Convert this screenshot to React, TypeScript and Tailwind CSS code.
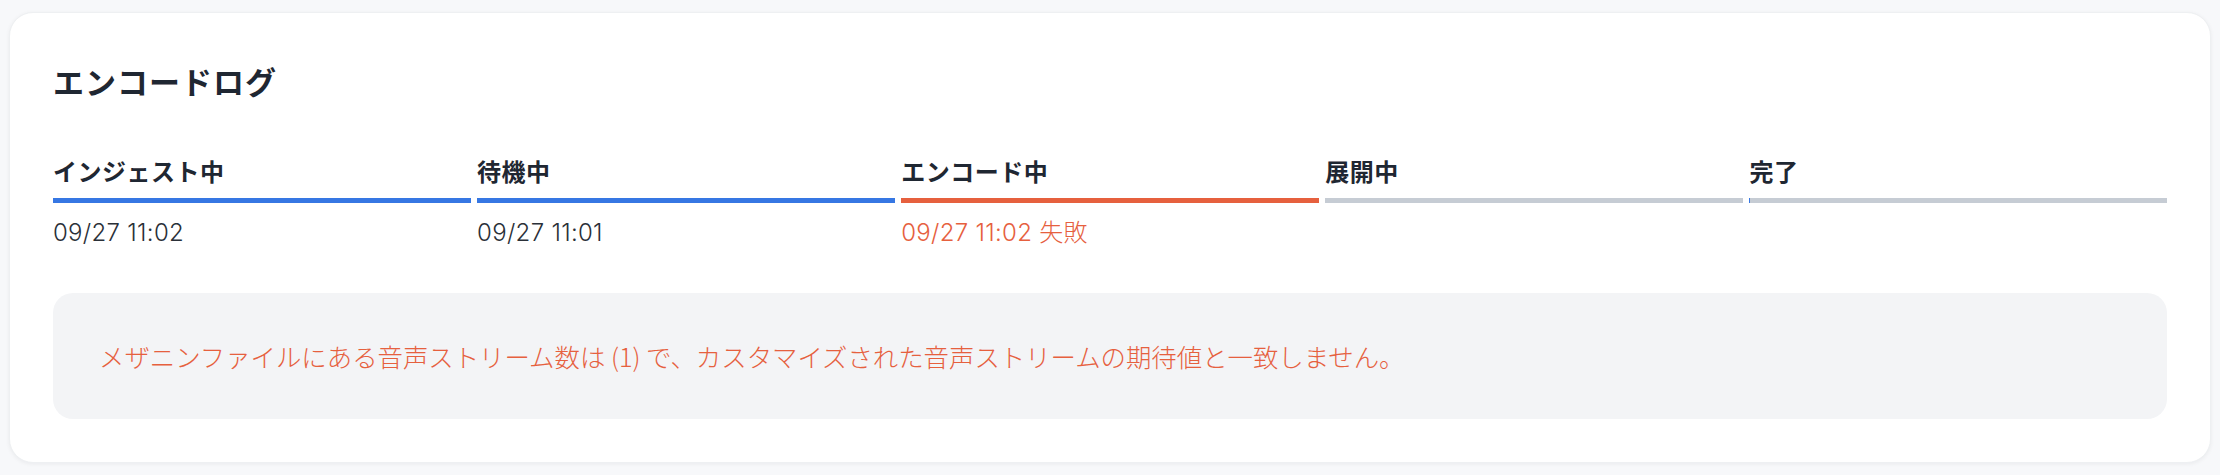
import React from 'react'

type Step = {
  label: string
  time?: string
  state: 'done' | 'failed' | 'pending'
}

const steps: Step[] = [
  { label: 'インジェスト中', time: '09/27 11:02', state: 'done' },
  { label: '待機中', time: '09/27 11:01', state: 'done' },
  { label: 'エンコード中', time: '09/27 11:02 失敗', state: 'failed' },
  { label: '展開中', state: 'pending' },
  { label: '完了', state: 'pending' },
]

function StepColumn({ step, isLast }: { step: Step; isLast: boolean }) {
  return (
    <div className="flex flex-col">
      <div className="h-[32px] text-[24px] leading-[32px] font-bold text-[#1f2732] tracking-[0.5px]">
        {step.label}
      </div>
      {/* progress bar */}
      <div
        className={`mt-[11px] h-[5px] w-full ${
          step.state === 'done'
            ? 'bg-[#3677e3]'
            : step.state === 'failed'
              ? 'bg-[#e6603e]'
              : 'bg-[#c6ccd4]'
        }`}
      >
        {isLast && <div className="h-full w-px bg-[#3677e3]" />}
      </div>
      <div
        className={`mt-[15px] h-[30px] text-[24px] leading-[30px] font-light tracking-[0.3px] ${
          step.state === 'failed' ? 'text-[#e6603e]' : 'text-[#2a3038]'
        }`}
        style={{ fontFamily: 'Inter, "Noto Sans CJK JP", sans-serif' }}
      >
        {step.time ?? ''}
      </div>
    </div>
  )
}

export default function App() {
  return (
    <div
      className="min-h-[475px] w-full bg-[#f7f8fa] pt-[12px] pl-[9px] pr-[9px] pb-[14px]"
      style={{ fontFamily: '"Noto Sans CJK JP", "Noto Sans", sans-serif' }}
    >
      <div className="rounded-[24px] border border-[#eef0f2] bg-white px-[43px] pt-[47px] pb-[43px] shadow-[0_1px_4px_rgba(17,24,39,0.06)]">
        {/* Title */}
        <h2 className="h-[42px] text-[31px] leading-[42px] font-bold text-[#1f2732] tracking-[1px]">
          エンコードログ
        </h2>

        {/* Steps */}
        <div className="mt-[53px] grid grid-cols-5 gap-x-[6.5px]">
          {steps.map((s, i) => (
            <StepColumn key={s.label} step={s} isLast={i === steps.length - 1} />
          ))}
        </div>

        {/* Error message */}
        <div className="mt-[45px] flex h-[126px] items-center rounded-[20px] bg-[#f3f4f6] pl-[46px] pr-[40px]">
          <p className="text-[25.4px] leading-[32px] font-light text-[#e6603e]">
            メザニンファイルにある音声ストリーム数は (1) で、カスタマイズされた音声ストリームの期待値と一致しません。
          </p>
        </div>
      </div>
    </div>
  )
}
